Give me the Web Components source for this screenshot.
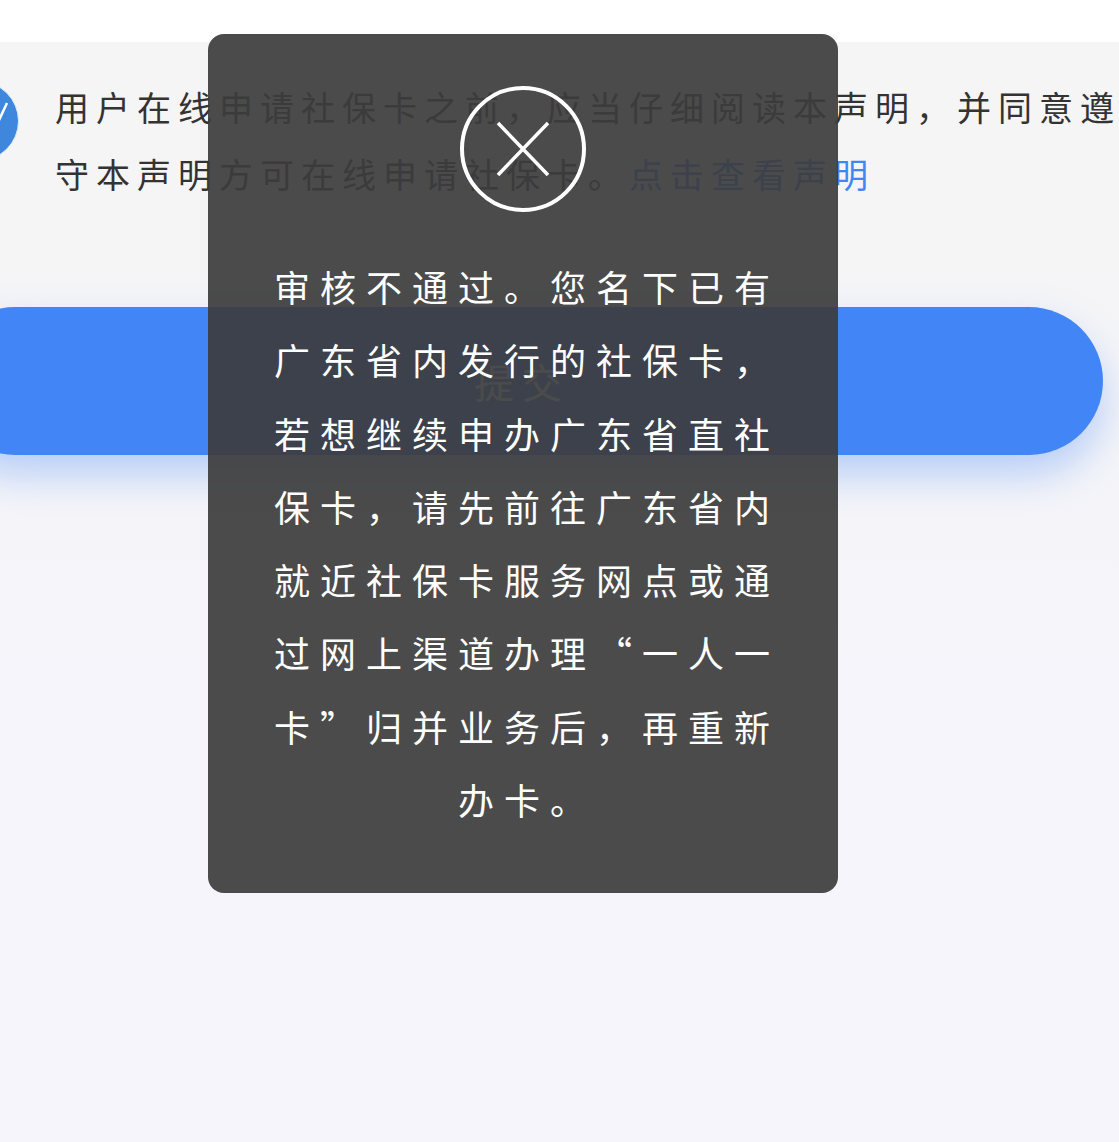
<!DOCTYPE html>
<html lang="zh">
<head>
<meta charset="utf-8">
<title>在线申请社保卡</title>
<style>
  html, body { margin: 0; padding: 0; height: 1142px; overflow: hidden; background: #fff; }
  body { font-family: "Noto Sans CJK SC", "Noto Sans", sans-serif; }
</style>
</head>
<body>
<apply-page>
  <statement-row>用户在线申请社保卡之前，应当仔细阅读本声明，并同意遵守本声明方可在线申请社保卡。<a slot="link">点击查看声明</a></statement-row>
  <submit-button>提交</submit-button>
</apply-page>
<error-toast>审核不通过。您名下已有广东省内发行的社保卡，若想继续申办广东省直社保卡，请先前往广东省内就近社保卡服务网点或通过网上渠道办理“一人一卡”归并业务后，再重新办卡。</error-toast>

<script>
  //page background, white strip on top then the grey area
  class ApplyPage extends HTMLElement {
    constructor() {
      super();
      this.attachShadow({mode: 'open'});
      this.shadowRoot.innerHTML = `
      <style>
        :host { display: block; height: 1142px; overflow: hidden; }
        .body {
          margin-top: 42px;
          height: 1100px;
          padding-top: 31px;
          box-sizing: border-box;
          background: linear-gradient(#f5f5f5 0, #f5f5f6 200px, #f5f5fb 700px);
        }
      </style>
      <div class="body"><slot></slot></div>`;
    }
  }

  //agreement text with the round check on its left (runs off the screen)
  class StatementRow extends HTMLElement {
    constructor() {
      super();
      this.attachShadow({mode: 'open'});
      this.shadowRoot.innerHTML = `
      <style>
        :host { display: flex; align-items: flex-start; margin-left: -61px; gap: 36px; width: 1230px; }
        .check { flex: none; width: 80px; height: 80px; margin-top: 8px; }
        .text {
          width: 1067px;
          font-size: 34px;
          line-height: 67px;
          letter-spacing: 7px;
          color: #333;
        }
        ::slotted(a) { color: #4285f6; }
      </style>
      <svg class="check" viewBox="0 0 80 80">
        <circle cx="40" cy="40" r="39.5" fill="#3e87dd" stroke="#d9ebfb" stroke-width="1"/>
        <path d="M32 42l22 10 14-30" fill="none" stroke="#fff" stroke-width="2.5"/>
      </svg>
      <div class="text"><slot></slot><slot name="link"></slot></div>`;
    }
  }

  class SubmitButton extends HTMLElement {
    constructor() {
      super();
      this.attachShadow({mode: 'open'});
      this.shadowRoot.innerHTML = `
      <style>
        :host {
          display: flex;
          align-items: center;
          justify-content: center;
          width: 1162px;
          height: 148px;
          margin: 100px 0 0 -59px;
          border-radius: 74px;
          background: #4285f6;
          box-shadow: 0 20px 40px rgba(66, 133, 246, .35);
          color: #fff;
          font-size: 40px;
          letter-spacing: 8px;
        }
      </style>
      <slot></slot>`;
    }
  }

  //the dark message lying over the page
  class ErrorToast extends HTMLElement {
    constructor() {
      super();
      this.attachShadow({mode: 'open'});
      this.shadowRoot.innerHTML = `
      <style>
        :host {
          position: absolute;
          left: 208px;
          top: 34px;
          width: 630px;
          height: 859px;
          box-sizing: border-box;
          padding-top: 52px;
          border-radius: 16px;
          background: rgba(60, 60, 60, .92);
          color: #fff;
          display: flex;
          flex-direction: column;
          align-items: center;
        }
        svg { width: 126px; height: 126px; flex: none; }
        .msg {
          width: 512px;
          margin-top: 38px;
          padding-left: 8px;
          font-size: 36px;
          line-height: 73.3px;
          letter-spacing: 10px;
          text-align: center;
        }
      </style>
      <svg viewBox="0 0 126 126" fill="none" stroke="#fff">
        <circle cx="63" cy="63" r="61" stroke-width="4"/>
        <path d="M38 37l50 52M88 37l-50 52" stroke-width="3.5"/>
      </svg>
      <div class="msg"><slot></slot></div>`;
    }
  }

  customElements.define('apply-page', ApplyPage);
  customElements.define('statement-row', StatementRow);
  customElements.define('submit-button', SubmitButton);
  customElements.define('error-toast', ErrorToast);
</script>
</body>
</html>
